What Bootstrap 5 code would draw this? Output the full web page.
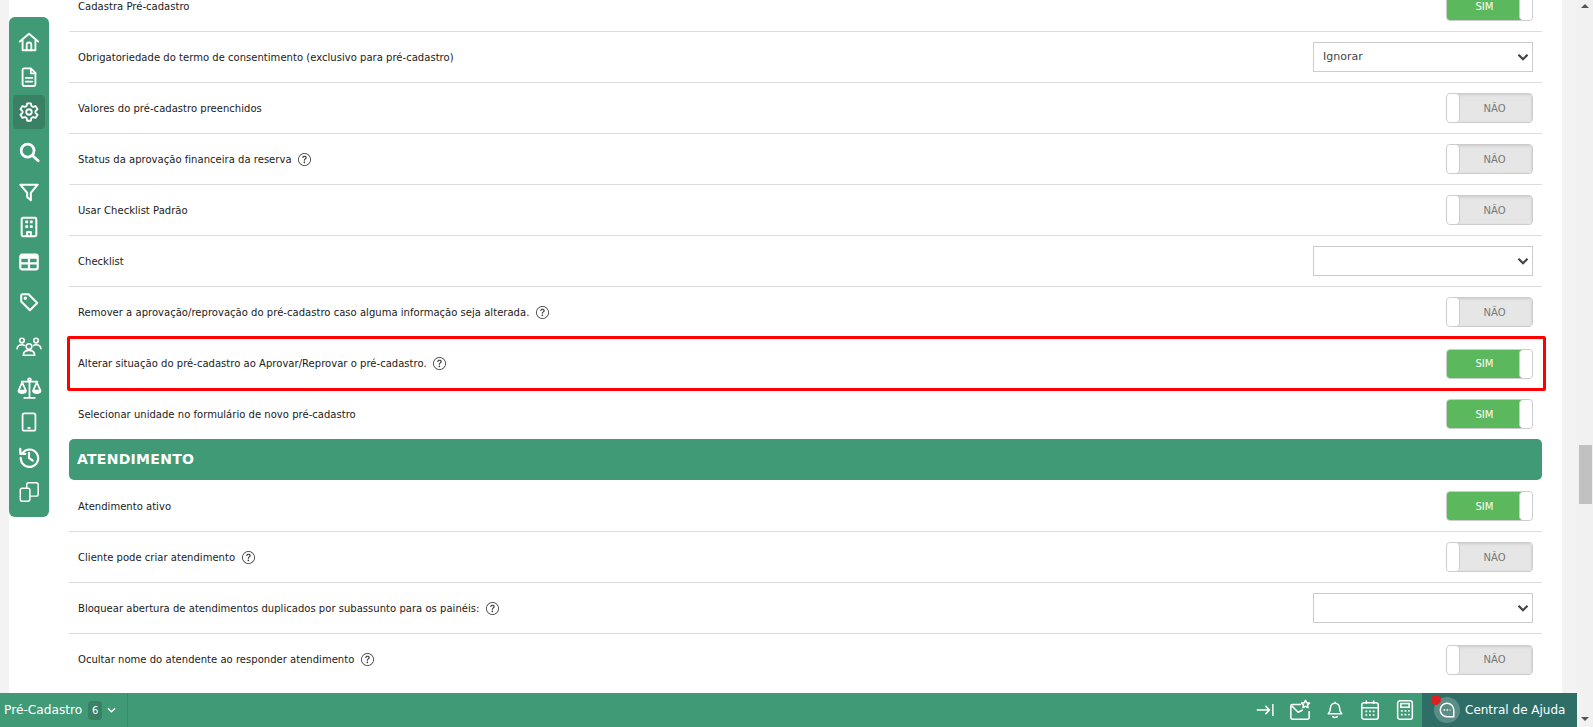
<!DOCTYPE html>
<html lang="pt-BR">
<head>
<meta charset="utf-8">
<title>Configurações</title>
<link href="https://cdn.jsdelivr.net/npm/bootstrap@5.3.0/dist/css/bootstrap.min.css" rel="stylesheet">
<style>
html,body{height:100%;overflow:hidden;margin:0}
body{font-family:"DejaVu Sans",sans-serif;font-size:10px;color:#222;background:#f3f3f3}
.shell{height:727px}
.mainzone{width:1577px}
.scrollview{height:693px;padding:0 15px 0 9px;overflow:hidden}
.sheet{background:#fff;height:100%;padding:0 20px 0 60px;overflow:hidden}
.rowlist{margin-top:-19px}
.setrow{height:51px;padding:0 9px 0 9px;border-color:#ddd;background:transparent;font-size:10px;color:#1a1a1a;letter-spacing:.03px}
.setrow.noline{border-bottom:0;height:50px}
.helpico{width:13px;height:13px;margin-left:6.5px;color:#333;flex:none}
.tog{width:87px;height:30px;border:1px solid #ccc;border-radius:4px;overflow:hidden;font-size:10px;background:#fff}
.tog-label{flex:1}
.tog-knob{width:13px;background:#fff;border-radius:4px;position:relative}
.tog.on .tog-label{background:#5cb85c;color:#fff;margin-right:-3px}
.tog.on .tog-knob{border-left:1px solid #ccc}
.tog.off{flex-direction:row-reverse}
.tog.off .tog-label{background:#e6e6e6;color:#777;margin-left:-3px;box-shadow:inset 0 1px 3px rgba(0,0,0,.12)}
.tog.off .tog-knob{border-right:1px solid #ccc}
.selbox{width:220px;height:30px;padding:1px 24px 0 9px;border:1px solid #ccc;border-radius:0;font-size:11px;color:#444;background-image:url("data:image/svg+xml,%3csvg xmlns='http://www.w3.org/2000/svg' viewBox='0 0 16 10'%3e%3cpath fill='none' stroke='%23444' stroke-width='3' d='m2 2 6 6 6-6'/%3e%3c/svg%3e");background-position:right 3px center;background-size:12px 8px}
.redmark{position:absolute;left:-2px;right:-4px;top:-2px;bottom:-2px;border:3px solid #f00;border-radius:2px;pointer-events:none}
.sectionhead{height:41px;margin-bottom:1px;background:#419a76;color:#fff;border-radius:5px;padding-left:8px;font-weight:700;font-size:14px;letter-spacing:.02em}
.sidemenu{position:absolute;left:9px;top:17px;width:40px;height:500px;background:#419a76;border-radius:6px;z-index:5}
.sideitem{position:absolute;left:4px;width:32px;height:34px;border-radius:4px}
.sideitem.active{background:#3a8065}
.sideitem svg{width:22px;height:22px}
.bottombar{height:34px;background:#419a76;color:#fff}
.modulebtn{width:128px;height:100%;border-right:1px solid #3a8a6a;font-size:12.2px;padding-left:4px}
.countchip{width:14px;height:19px;margin-left:6px;background:#3a8065;border-radius:4px;font-size:10px}
.barchev{width:9px;height:6px;margin-left:5px}
.baricon{width:35px}
.baricon svg{width:22px;height:22px}
.helpdesk{width:155px;background:#2e6e66;font-size:12px}
.helpbubble{width:26px;height:26px;margin:0 5px 0 12px;background:rgba(255,255,255,.22)}
.helpbubble svg{width:18px;height:18px}
.reddot{position:absolute;left:9px;top:2px;width:10px;height:10px;background:#e02020;z-index:2}
.fakebar{width:16px;background:#f1f1f1;height:727px}
.thumbbar{width:13px;height:59px;background:#c1c1c1;margin:437px 0 0 2px}
.tri-up,.tri-down{width:0;height:0;border-left:4px solid transparent;border-right:4px solid transparent;margin-left:4px}
.tri-up{border-bottom:4px solid #555;margin-top:4px;height:4px}
.tri-down{border-top:4px solid #555;margin-top:auto;margin-bottom:6px}
</style>
</head>
<body>
<svg width="0" height="0" class="position-absolute">
<symbol id="q" viewBox="0 0 16 16"><path fill="currentColor" d="M8 15A7 7 0 1 1 8 1a7 7 0 0 1 0 14zm0 1A8 8 0 1 0 8 0a8 8 0 0 0 0 16z"/><path fill="currentColor" d="M5.255 5.786a.237.237 0 0 0 .241.247h.825c.138 0 .248-.113.266-.25.09-.656.54-1.134 1.342-1.134.686 0 1.314.343 1.314 1.168 0 .635-.374.927-.965 1.371-.673.489-1.206 1.06-1.168 1.987l.003.217a.25.25 0 0 0 .25.246h.811a.25.25 0 0 0 .25-.25v-.105c0-.718.273-.927 1.01-1.486.609-.463 1.244-.977 1.244-2.056 0-1.511-1.276-2.241-2.673-2.241-1.267 0-2.655.59-2.75 2.286zm1.557 5.763c0 .533.425.927 1.01.927.609 0 1.028-.394 1.028-.927 0-.552-.42-.94-1.029-.94-.584 0-1.009.388-1.009.94z"/></symbol>
</svg>
<div class="shell d-flex">
<div class="mainzone d-flex flex-column position-relative">
<nav class="sidemenu">
<div class="sideitem d-flex align-items-center justify-content-center" style="top:8px"><svg viewBox="0 0 24 24" fill="none" stroke="#fff" stroke-width="2" stroke-linejoin="round" stroke-linecap="round"><path d="M2 11.5 12 3l10 8.500M5 9.500V21h14V9.500"/><path d="M9.500 21v-6a2.500 2.500 0 0 1 5 0v6"/></svg></div>
<div class="sideitem d-flex align-items-center justify-content-center" style="top:43px"><svg viewBox="0 0 24 24" fill="none" stroke="#fff" stroke-width="2" stroke-linejoin="round" stroke-linecap="round"><path d="M6.500 2.500H14l5 5v12.500a1.800 1.800 0 0 1-1.800 1.800H6.800A1.800 1.800 0 0 1 5 20V4.300A1.800 1.800 0 0 1 6.500 2.500z"/><path d="M14 3v5h5M8.500 13h7M8.500 17h7"/></svg></div>
<div class="sideitem active d-flex align-items-center justify-content-center" style="top:78px"><svg viewBox="0 0 24 24" fill="none" stroke="#fff" stroke-width="2" stroke-linejoin="round"><circle cx="12" cy="12" r="3"/><path d="M10 2.500h4l.6 2.900 1.900 1.100 2.800-.9 2 3.400-2.200 2v2l2.200 2-2 3.400-2.800-.9-1.900 1.100-.6 2.900h-4l-.6-2.900-1.900-1.100-2.800.9-2-3.400 2.200-2v-2l-2.200-2 2-3.400 2.800.9 1.900-1.100z"/></svg></div>
<div class="sideitem d-flex align-items-center justify-content-center" style="top:118px"><svg viewBox="0 0 24 24" fill="none" stroke="#fff" stroke-width="3" stroke-linecap="round"><circle cx="10.500" cy="10.500" r="7"/><path d="m16 16 6 5.500"/></svg></div>
<div class="sideitem d-flex align-items-center justify-content-center" style="top:158px"><svg viewBox="0 0 24 24" fill="none" stroke="#fff" stroke-width="2.200" stroke-linejoin="round"><path d="M2.500 4h19l-7.500 9v8l-4-3.500V13z"/></svg></div>
<div class="sideitem d-flex align-items-center justify-content-center" style="top:193px"><svg viewBox="0 0 24 24" fill="none" stroke="#fff" stroke-width="2.200" stroke-linejoin="round"><rect x="4" y="2" width="16" height="20" rx="1.500"/><path d="M10 22v-4.500h4V22"/><path stroke-width="3" d="M8 6.500h3M13 6.500h3M8 11.500h3M13 11.500h3"/></svg></div>
<div class="sideitem d-flex align-items-center justify-content-center" style="top:228px"><svg viewBox="0 0 24 24" fill="none" stroke="#fff" stroke-width="2.400"><rect x="2.500" y="4" width="19" height="16" rx="2"/><path d="M2.500 13.500h19M12 8v12"/><path stroke-width="4" d="M3 6.500h18"/></svg></div>
<div class="sideitem d-flex align-items-center justify-content-center" style="top:268px"><svg viewBox="0 0 24 24" fill="none" stroke="#fff" stroke-width="2.200" stroke-linejoin="round"><path d="M3.500 5a1.500 1.500 0 0 1 1.500-1.500h6.500l9.500 9.500-8 8-9.500-9.500z"/><circle cx="8" cy="8" r=".8" fill="#fff"/></svg></div>
<div class="sideitem d-flex align-items-center justify-content-center" style="top:312px"><svg viewBox="0 0 24 24" fill="none" stroke="#fff" stroke-width="1.500" stroke-linecap="round" style="width:26px;height:26px"><circle cx="12" cy="12.500" r="2.600"/><circle cx="5.500" cy="7" r="2.100"/><circle cx="18.500" cy="7" r="2.100"/><path d="M6.800 20.500c0-3 2.300-4.500 5.200-4.500s5.200 1.500 5.200 4.500zM1 14.500c.3-2.300 2-3.600 4.500-3.600.9 0 1.700.2 2.300.6M23 14.500c-.3-2.300-2-3.600-4.500-3.600-.9 0-1.700.2-2.300.6"/></svg></div>
<div class="sideitem d-flex align-items-center justify-content-center" style="top:354px"><svg viewBox="0 0 24 24" fill="none" stroke="#fff" stroke-width="1.700" stroke-linejoin="round" stroke-linecap="round" style="width:25px;height:25px"><path d="M12 5v15M7 21h10M4.500 5.500h15"/><circle cx="12" cy="3.500" r="1.300"/><path d="M5 6 1.500 14h7zM19 6l-3.500 8h7z"/><path fill="#fff" d="M1.500 14.500c.5 2.500 6.500 2.500 7 0zM15.500 14.500c.5 2.500 6.500 2.500 7 0z"/></svg></div>
<div class="sideitem d-flex align-items-center justify-content-center" style="top:388px"><svg viewBox="0 0 24 24" fill="none" stroke="#fff" stroke-width="1.900"><rect x="5" y="2.500" width="14" height="19" rx="2"/><path d="M10.500 18.500h3" stroke-width="2.200"/></svg></div>
<div class="sideitem d-flex align-items-center justify-content-center" style="top:423px"><svg viewBox="0 0 24 24" fill="none" stroke="#fff" stroke-width="2.400" stroke-linecap="round" stroke-linejoin="round"><path d="M5 7.500A9.500 9.500 0 1 1 3 13"/><path d="M2.500 3v5.500H8"/><path d="M12 7.500V13l4 3"/></svg></div>
<div class="sideitem d-flex align-items-center justify-content-center" style="top:458px"><svg viewBox="0 0 24 24" fill="none" stroke="#fff" stroke-width="1.600" stroke-linejoin="round"><rect x="2.500" y="8" width="10.500" height="14" rx="2"/><path d="M9.500 8V4a2 2 0 0 1 2-2H20a2 2 0 0 1 2 2v10.500a2 2 0 0 1-2 2h-7"/></svg></div>
</nav>
<div class="scrollview">
<div class="sheet">
<div class="list-group list-group-flush rowlist">
<div class="list-group-item setrow d-flex align-items-center justify-content-between"><span>Cadastra Pré-cadastro</span><div class="tog on d-flex"><div class="tog-label d-flex align-items-center justify-content-center">SIM</div><div class="tog-knob"></div></div></div>
<div class="list-group-item setrow d-flex align-items-center justify-content-between"><span>Obrigatoriedade do termo de consentimento (exclusivo para pré-cadastro)</span><select class="form-select selbox"><option>Ignorar</option></select></div>
<div class="list-group-item setrow d-flex align-items-center justify-content-between"><span>Valores do pré-cadastro preenchidos</span><div class="tog off d-flex"><div class="tog-label d-flex align-items-center justify-content-center">NÃO</div><div class="tog-knob"></div></div></div>
<div class="list-group-item setrow d-flex align-items-center justify-content-between"><span class="d-flex align-items-center">Status da aprovação financeira da reserva<svg class="helpico"><use href="#q"/></svg></span><div class="tog off d-flex"><div class="tog-label d-flex align-items-center justify-content-center">NÃO</div><div class="tog-knob"></div></div></div>
<div class="list-group-item setrow d-flex align-items-center justify-content-between"><span>Usar Checklist Padrão</span><div class="tog off d-flex"><div class="tog-label d-flex align-items-center justify-content-center">NÃO</div><div class="tog-knob"></div></div></div>
<div class="list-group-item setrow d-flex align-items-center justify-content-between"><span>Checklist</span><select class="form-select selbox"><option></option></select></div>
<div class="list-group-item setrow d-flex align-items-center justify-content-between"><span class="d-flex align-items-center">Remover a aprovação/reprovação do pré-cadastro caso alguma informação seja alterada.<svg class="helpico"><use href="#q"/></svg></span><div class="tog off d-flex"><div class="tog-label d-flex align-items-center justify-content-center">NÃO</div><div class="tog-knob"></div></div></div>
<div class="list-group-item setrow d-flex align-items-center justify-content-between position-relative border-bottom-0"><span class="d-flex align-items-center">Alterar situação do pré-cadastro ao Aprovar/Reprovar o pré-cadastro.<svg class="helpico"><use href="#q"/></svg></span><div class="tog on d-flex"><div class="tog-label d-flex align-items-center justify-content-center">SIM</div><div class="tog-knob"></div></div><div class="redmark"></div></div>
<div class="list-group-item setrow noline d-flex align-items-center justify-content-between"><span>Selecionar unidade no formulário de novo pré-cadastro</span><div class="tog on d-flex"><div class="tog-label d-flex align-items-center justify-content-center">SIM</div><div class="tog-knob"></div></div></div>
<div class="sectionhead d-flex align-items-center">ATENDIMENTO</div>
<div class="list-group-item setrow d-flex align-items-center justify-content-between"><span>Atendimento ativo</span><div class="tog on d-flex"><div class="tog-label d-flex align-items-center justify-content-center">SIM</div><div class="tog-knob"></div></div></div>
<div class="list-group-item setrow d-flex align-items-center justify-content-between"><span class="d-flex align-items-center">Cliente pode criar atendimento<svg class="helpico"><use href="#q"/></svg></span><div class="tog off d-flex"><div class="tog-label d-flex align-items-center justify-content-center">NÃO</div><div class="tog-knob"></div></div></div>
<div class="list-group-item setrow d-flex align-items-center justify-content-between"><span class="d-flex align-items-center">Bloquear abertura de atendimentos duplicados por subassunto para os painéis:<svg class="helpico"><use href="#q"/></svg></span><select class="form-select selbox"><option></option></select></div>
<div class="list-group-item setrow d-flex align-items-center justify-content-between"><span class="d-flex align-items-center">Ocultar nome do atendente ao responder atendimento<svg class="helpico"><use href="#q"/></svg></span><div class="tog off d-flex"><div class="tog-label d-flex align-items-center justify-content-center">NÃO</div><div class="tog-knob"></div></div></div>
</div>
</div>
</div>
<footer class="bottombar d-flex align-items-stretch">
<div class="modulebtn d-flex align-items-center">Pré-Cadastro<span class="countchip d-flex align-items-center justify-content-center">6</span><svg class="barchev" viewBox="0 0 10 6" fill="none" stroke="#fff" stroke-width="1.400"><path d="m1 1 4 4 4-4"/></svg></div>
<div class="d-flex align-items-center ms-auto">
<div class="baricon d-flex justify-content-center"><svg viewBox="0 0 24 24" fill="none" stroke="#fff" stroke-width="1.900" style="width:18px;height:18px"><path d="M1 12h17M12.500 6.500 18 12l-5.500 5.500M22.500 4v16"/></svg></div>
<div class="baricon d-flex justify-content-center"><svg viewBox="0 0 24 24" fill="none" stroke="#fff" stroke-width="1.700" stroke-linejoin="round"><path d="M13 6H3.500A1.500 1.500 0 0 0 2 7.500v13A1.500 1.500 0 0 0 3.500 22h17a1.500 1.500 0 0 0 1.500-1.500V13"/><path d="m3 7.500 7 7 5-2.500"/><path d="m18 1.500 1.400 2.600 2.900.4-2.100 2 .5 2.900-2.700-1.400-2.700 1.400.5-2.900-2.100-2 2.900-.4z"/></svg></div>
<div class="baricon d-flex justify-content-center"><svg viewBox="0 0 24 24" fill="none" stroke="#fff" stroke-width="2" stroke-linejoin="round" style="width:18px;height:18px"><path d="M12 3a6 6 0 0 0-6 6c0 4-1 6-3 8h18c-2-2-3-4-3-8a6 6 0 0 0-6-6z"/><path d="M12 1v2M9 20a3 2 0 0 0 6 0"/></svg></div>
<div class="baricon d-flex justify-content-center"><svg viewBox="0 0 24 24" fill="none" stroke="#fff" stroke-width="1.700"><rect x="3" y="4" width="18" height="18" rx="2.500"/><path d="M3 9.500h18M8 1.500v4M16 1.500v4"/><path stroke-width="1.800" stroke-dasharray="2 2" d="M7 13.500h11M7 17.500h11"/></svg></div>
<div class="baricon d-flex justify-content-center"><svg viewBox="0 0 24 24" fill="none" stroke="#fff" stroke-width="1.700"><rect x="4" y="2" width="16" height="20" rx="2.500"/><rect x="7.500" y="5" width="9" height="4"/><path stroke-width="1.800" stroke-dasharray="2 2" d="M7.500 13h9.500M7.500 17h9.500"/></svg></div>
</div>
<div class="helpdesk d-flex align-items-center position-relative">
<span class="reddot rounded-circle"></span>
<span class="helpbubble rounded-circle d-flex align-items-center justify-content-center"><svg viewBox="0 0 24 24" fill="none" stroke="#fff" stroke-width="2"><path d="M12 3a9 9 0 0 1 9 9v9h-9a9 9 0 0 1 0-18z"/><path stroke-width="2.200" stroke-dasharray="2 2" d="M7.500 12h9"/></svg></span>
<span>Central de Ajuda</span>
</div>
</footer>
</div>
<div class="fakebar d-flex flex-column">
<div class="tri-up"></div>
<div class="thumbbar"></div>
<div class="tri-down"></div>
</div>
</div>
<script src="https://cdn.jsdelivr.net/npm/bootstrap@5.3.0/dist/js/bootstrap.bundle.min.js"></script>
</body>
</html>
